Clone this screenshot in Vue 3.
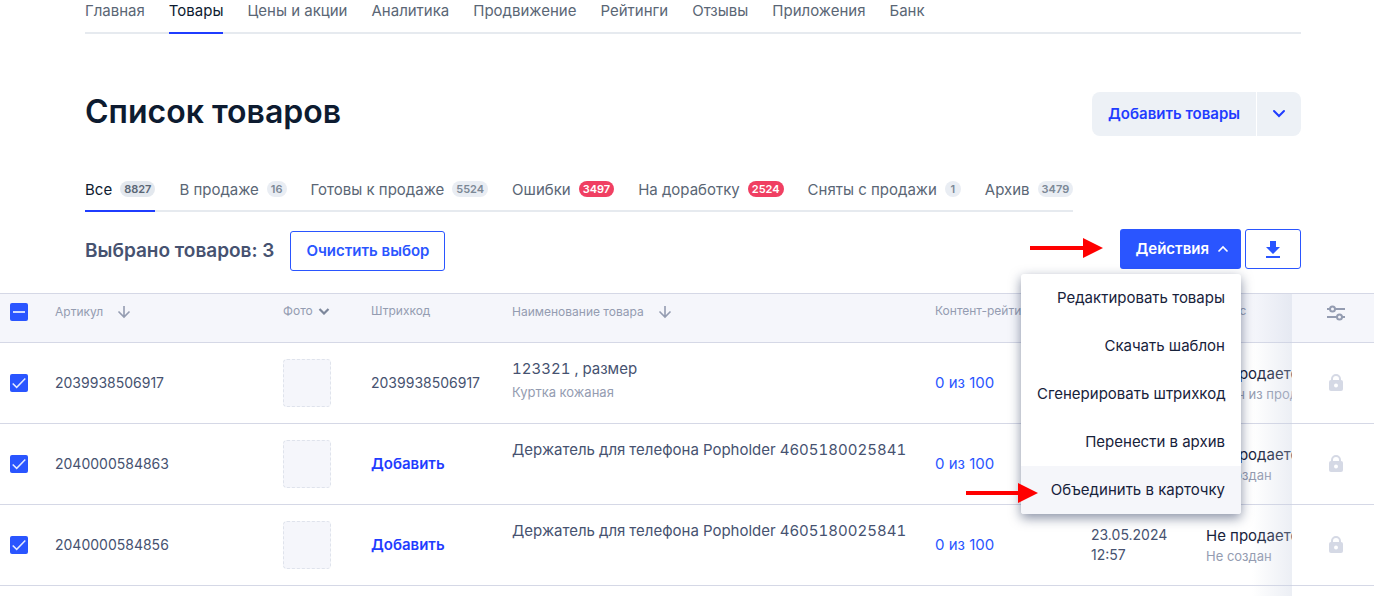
<script setup>
import { ref } from 'vue'

const nav = ['Главная', 'Товары', 'Цены и акции', 'Аналитика', 'Продвижение', 'Рейтинги', 'Отзывы', 'Приложения', 'Банк']
const tabs = [
  { name: 'Все', count: 8827, active: true },
  { name: 'В продаже', count: 16 },
  { name: 'Готовы к продаже', count: 5524 },
  { name: 'Ошибки', count: 3497, alert: true },
  { name: 'На доработку', count: 2524, alert: true },
  { name: 'Сняты с продажи', count: 1 },
  { name: 'Архив', count: 3479 },
]
const menu = ['Редактировать товары', 'Скачать шаблон', 'Сгенерировать штрихкод', 'Перенести в архив', 'Объединить в карточку']
const rows = ref([
  { sku: '2039938506917', barcode: '2039938506917', name: '123321 , размер', note: 'Куртка кожаная', status: 'Не продается', detail: 'Убран из продажи', checked: true },
  { sku: '2040000584863', name: 'Держатель для телефона Popholder 4605180025841', status: 'Не продается', detail: 'Не создан', checked: true },
  { sku: '2040000584856', name: 'Держатель для телефона Popholder 4605180025841', status: 'Не продается', detail: 'Не создан', checked: true },
])
</script>

<template>
  <div class="page">
    <header class="container">
      <nav class="nav">
        <a v-for="item in nav" :key="item" href="#" :class="{ active: item === 'Товары' }">{{ item }}</a>
      </nav>
      <div class="heading">
        <h1>Список товаров</h1>
        <div class="split">
          <button type="button" class="add">Добавить товары</button>
          <button type="button" class="more" aria-label="Ещё">
            <svg width="14" height="10" viewBox="0 0 14 10"><path d="M2 2l5 5 5-5" fill="none" stroke="currentColor" stroke-width="2" stroke-linecap="round" /></svg>
          </button>
        </div>
      </div>
      <div class="tabs">
        <a v-for="t in tabs" :key="t.name" href="#" :class="{ active: t.active }">
          {{ t.name }}<span class="badge" :class="{ alert: t.alert }">{{ t.count }}</span>
        </a>
      </div>
      <div class="toolbar">
        <div class="selection">
          <span class="selected">Выбрано товаров: 3</span>
          <button type="button" class="clear">Очистить выбор</button>
        </div>
        <div class="tools">
          <div class="actions">
            <button type="button" class="primary" aria-expanded="true">
              <span>Действия</span>
              <svg width="12" height="8" viewBox="0 0 12 8"><path d="M1.500 6.500L6 2l4.500 4.500" fill="none" stroke="currentColor" stroke-width="1.600" /></svg>
            </button>
            <svg class="arrow to-button" width="73" height="20" viewBox="0 0 73 20"><path d="M0 8h53V0l20 10-20 10v-8H0z" fill="#f00" /></svg>
            <ul class="menu">
              <li v-for="(m, i) in menu" :key="m">
                <button type="button" :class="{ hover: i === 4 }">{{ m }}</button>
                <svg v-if="i === 4" class="arrow to-item" width="72" height="20" viewBox="0 0 72 20"><path d="M0 8h52V0l20 10-20 10v-8H0z" fill="#f00" /></svg>
              </li>
            </ul>
          </div>
          <button type="button" class="download" aria-label="Скачать">
            <svg width="16" height="20" viewBox="0 0 16 20"><path d="M5 2h6v6h4l-7 7-7-7h4zM1 17h14v2H1z" fill="currentColor" /></svg>
          </button>
        </div>
      </div>
    </header>

    <main class="table-wrap">
      <table>
        <colgroup>
          <col class="c-check"><col class="c-sku"><col class="c-photo"><col class="c-barcode"><col>
          <col class="c-rating"><col class="c-date"><col class="c-status"><col class="c-lock">
        </colgroup>
        <thead>
          <tr>
            <th class="check"><input type="checkbox" class="partial" aria-label="Выбрать все"></th>
            <th>
              <span class="sort">Артикул
                <svg width="14" height="14" viewBox="0 0 14 14"><path d="M7 1v11M1.500 6.500L7 12l5.500-5.500" fill="none" stroke="currentColor" stroke-width="1.600" /></svg>
              </span>
            </th>
            <th><span class="photo-head">Фото
              <svg width="12" height="8" viewBox="0 0 12 8"><path d="M1.500 2L6 6.500 10.500 2" fill="none" stroke="#7d879b" stroke-width="2.200" /></svg>
            </span></th>
            <th>Штрихкод</th>
            <th>
              <span class="sort">Наименование товара
                <svg width="14" height="14" viewBox="0 0 14 14"><path d="M7 1v11M1.500 6.500L7 12l5.500-5.500" fill="none" stroke="currentColor" stroke-width="1.600" /></svg>
              </span>
            </th>
            <th>Контент-рейтинг</th>
            <th>Создан</th>
            <th>Статус</th>
            <th class="lock">
              <button type="button" class="settings" aria-label="Настроить столбцы">
                <svg width="20" height="18" viewBox="0 0 20 18"><g fill="none" stroke="currentColor" stroke-width="2"><path d="M1 5h3M9 5h10M1 13h10M16 13h3" /><circle cx="6.500" cy="5" r="2.500" /><circle cx="13.500" cy="13" r="2.500" /></g></svg>
              </button>
            </th>
          </tr>
        </thead>
        <tbody>
          <tr v-for="r in rows" :key="r.sku">
            <td class="check"><input v-model="r.checked" type="checkbox" :aria-label="'Выбрать ' + r.sku"></td>
            <td>{{ r.sku }}</td>
            <td><div class="photo"></div></td>
            <td>
              <template v-if="r.barcode">{{ r.barcode }}</template>
              <a v-else href="#" class="add-code">Добавить</a>
            </td>
            <td class="name">
              <div>{{ r.name }}</div>
              <small v-if="r.note">{{ r.note }}</small>
            </td>
            <td><a href="#" class="rating">0 из 100</a></td>
            <td class="date">23.05.2024<br>12:57</td>
            <td class="status">
              <div>{{ r.status }}</div>
              <small>{{ r.detail }}</small>
            </td>
            <td class="lock">
              <svg width="16" height="20" viewBox="0 0 16 20"><path d="M4 9V6a4 4 0 0 1 8 0v3" fill="none" stroke="currentColor" stroke-width="2" /><rect x="1" y="7" width="14" height="11" rx="2" fill="currentColor" /><circle cx="8" cy="12.500" r="2" fill="#fff" /></svg>
            </td>
          </tr>
        </tbody>
      </table>
      <div class="fade"></div>
    </main>
  </div>
</template>

<style>
body { margin: 0; background: #fff; overflow: hidden; }
</style>

<style scoped>
.page { font-family: Inter, "Noto Sans", sans-serif; font-size: 15px; color: #465270; }
.page * { box-sizing: border-box; }
a { text-decoration: none; color: inherit; }
button { font: inherit; margin: 0; padding: 0; border: 0; background: none; cursor: pointer; }
svg { display: block; flex: none; }
.container { padding: 0 73px 0 85px; }
.nav { display: flex; gap: 24px; border-bottom: 2px solid #e6eaef; }
.nav a { height: 34px; margin-bottom: -2px; line-height: 22px; color: #5a6675; white-space: nowrap; }
.nav a.active, .tabs a.active { color: #0d1b30; border-bottom: 2px solid #1f3cff; }
.heading { display: flex; justify-content: space-between; align-items: flex-start; margin-top: 58px; }
h1 { margin: 0; font-size: 32px; line-height: 40px; font-weight: 600; color: #0d1b30; }
.split { display: flex; gap: 1px; color: #1f3cff; font-weight: 600; }
.split button { height: 44px; background: #edf1f6; color: inherit; }
.split .add { padding: 0 16px 2px; border-radius: 8px 0 0 8px; }
.split .more { display: flex; align-items: center; justify-content: center; width: 44px; border-radius: 0 8px 8px 0; }
.tabs { display: flex; width: max-content; gap: 24px; margin-top: 40px; border-bottom: 2px solid #e6eaef; }
.tabs a { display: flex; align-items: center; height: 36px; margin-bottom: -2px; padding-bottom: 8px; color: #5a6675; border-bottom: 2px solid transparent; white-space: nowrap; }
.badge { min-width: 16px; margin-left: 8px; padding: 0 4px; border-radius: 8px; background: #e9edf3; color: #7c8896; font-size: 11px; line-height: 16px; font-weight: 600; text-align: center; }
.active .badge { background: #e3e8ee; color: #5a6675; }
.badge.alert { background: #f03f62; color: #fff; }
.toolbar { display: flex; justify-content: space-between; padding: 17px 0 22px; }
.selection { display: flex; align-items: center; gap: 16px; padding-top: 2px; }
.selected { font-size: 19px; line-height: 24px; font-weight: 600; }
.clear { height: 40px; padding: 0 15px 2px; border: 1px solid #2a55ff; border-radius: 3px; color: #2a55ff; font-weight: 600; }
.tools { display: flex; gap: 4px; }
.actions { position: relative; }
.primary { display: flex; align-items: center; gap: 8px; height: 40px; padding: 0 12px 0 16px; border-radius: 3px; background: #2a55ff; color: #fff; font-weight: 600; }
.primary span { padding-bottom: 2px; }
.download { display: flex; align-items: center; justify-content: center; width: 56px; height: 40px; border: 1px solid #2a55ff; border-radius: 3px; color: #2a55ff; }
.arrow { position: absolute; }
.to-button { right: 138px; top: 9px; }
.menu { position: absolute; z-index: 3; top: 45px; right: 0; width: 220px; margin: 0; padding: 0; list-style: none; background: #fff; border-radius: 3px; box-shadow: 0 4px 12px rgba(20, 35, 75, 0.5); }
.menu li { position: relative; }
.menu button { width: 100%; height: 48px; padding: 0 16px 2px; text-align: right; color: #17223b; white-space: nowrap; }
.menu .hover { background: #f5f6fa; border-radius: 0 0 3px 3px; }
.to-item { right: 203px; top: 17px; }
.table-wrap { position: relative; padding-bottom: 10px; }
table { width: 100%; table-layout: fixed; border-collapse: collapse; font-size: 14px; line-height: 20px; }
.c-check { width: 39px; }
.c-sku { width: 228px; }
.c-photo { width: 88px; }
.c-barcode { width: 141px; }
.c-rating { width: 156px; }
.c-date { width: 115px; }
.c-status { width: 102px; }
.c-lock { width: 82px; }
tr { border-top: 1px solid #d5d8e6; border-bottom: 1px solid #d5d8e6; }
th { height: 49px; padding: 8px 0 0 16px; vertical-align: top; text-align: left; background: #f5f6fb; color: #949cb1; font-size: 12px; line-height: 18px; font-weight: 400; white-space: nowrap; }
td { height: 81px; padding: 0 0 0 16px; vertical-align: middle; white-space: nowrap; overflow: hidden; }
.sort { display: flex; align-items: center; gap: 14px; line-height: 20px; }
.photo-head { display: flex; align-items: center; gap: 5px; }
.check { padding-left: 10px; }
input { appearance: none; display: block; width: 18px; height: 18px; margin: 0; border-radius: 2px; background: #2a55ff; position: relative; }
th input { margin-top: 1px; }
input:checked::after { content: ''; display: block; width: 18px; height: 18px; background: #e4eaff; clip-path: polygon(12% 56%, 18% 50%, 37% 68%, 82% 22%, 88% 28%, 37% 80%); }
.partial::after { content: ''; position: absolute; left: 3px; top: 8px; width: 12px; height: 2px; background: #cfdaff; }
.photo { width: 48px; height: 48px; border: 1px dashed #dfe3ec; border-radius: 4px; background: #f5f6fb; }
.add-code { color: #1f3cff; font-size: 15px; font-weight: 600; }
.rating { color: #2a55ff; font-size: 15px; }
.name { vertical-align: top; padding-top: 14px; font-size: 15px; line-height: 24px; font-variant-numeric: tabular-nums; }
small { display: block; font-size: 13px; line-height: 20px; color: #949cb1; }
.name small { line-height: 22px; }
.status { font-size: 15px; line-height: 22px; color: #17223b; }
.status div { padding-top: 2px; line-height: 20px; }
.lock { padding: 0 0 0 6px; color: #d5d9e5; }
.lock svg { margin: 0 auto; }
.settings { display: block; width: 100%; padding-top: 10px; color: #949cb1; }
.fade { position: absolute; top: 1px; bottom: 0; right: 82px; width: 40px; background: linear-gradient(to right, rgba(200, 208, 225, 0), rgba(200, 208, 225, 0.35)); pointer-events: none; }
</style>
